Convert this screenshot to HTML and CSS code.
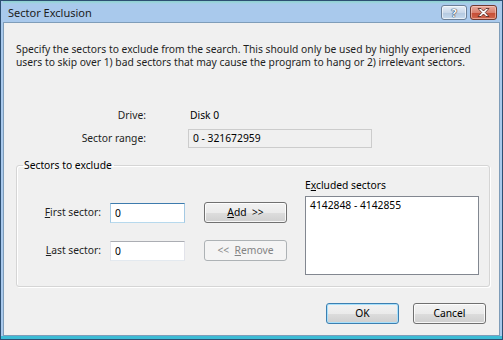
FILE: index.html
```html
<!DOCTYPE html>
<html lang="en">
<head>
    <meta charset="UTF-8">
    <title>Sector Exclusion</title>
    <link rel="stylesheet" href="styles.css">
</head>
<body>
    <div class="window">
        <div class="titlebar">
            <span class="title">Sector Exclusion</span>
            <div class="caption-buttons">
                <span class="cap-btn help">?</span>
                <span class="cap-btn close">
                    <svg width="13" height="9" viewBox="0 0 13 9">
                        <path d="M1 0.5 L4 0.5 L6.5 3 L9 0.5 L12 0.5 L8.3 4.5 L12 8.5 L9 8.5 L6.5 6 L4 8.5 L1 8.5 L4.7 4.5 Z" fill="#fff" stroke="#4a2018" stroke-width="0.8" stroke-linejoin="round"/>
                    </svg>
                </span>
            </div>
        </div>
        <div class="client">
            <p class="intro">Specify the sectors to exclude from the search. This should only be used by highly experienced<br>users to skip over 1) bad sectors that may cause the program to hang or 2) irrelevant sectors.</p>

            <div class="info">
                <span class="info-label">Drive:</span>
                <span class="info-value">Disk 0</span>
                <span class="info-label">Sector range:</span>
                <span class="readonly">0 - 321672959</span>
            </div>

            <fieldset class="group">
                <legend>Sectors to exclude</legend>
                <div class="group-body">
                    <div class="fields">
                        <label class="field-label" for="first"><u>F</u>irst sector:</label>
                        <input class="textbox focused" type="text" id="first" value="0">
                        <button class="btn"><u>A</u>dd &nbsp;&gt;&gt;</button>
                        <label class="field-label" for="last"><u>L</u>ast sector:</label>
                        <input class="textbox" type="text" id="last" value="0">
                        <button class="btn" disabled>&lt;&lt; &nbsp;<u>R</u>emove</button>
                    </div>
                    <div class="excluded">
                        <div class="excluded-label">E<u>x</u>cluded sectors</div>
                        <div class="listbox">
                            <div class="list-item">4142848 - 4142855</div>
                        </div>
                    </div>
                </div>
            </fieldset>

            <div class="actions">
                <button class="btn default">OK</button>
                <button class="btn">Cancel</button>
            </div>
        </div>
    </div>
</body>
</html>
```

FILE: styles.css
```css
* {
    margin: 0;
    padding: 0;
    box-sizing: border-box;
}

body {
    width: 503px;
    height: 340px;
    overflow: hidden;
    font-family: "Noto Sans", "Liberation Sans", sans-serif;
    font-size: 10.3px;
    line-height: 13px;
    color: #000;
}

.window {
    display: flex;
    flex-direction: column;
    width: 503px;
    height: 340px;
    border: 1px solid #2d4f73;
    padding: 0 2px 3px 2px;
    background: linear-gradient(to top, #3dbcd6 0, #3dbcd6 3px, #a9c9ec 3px);
}

/* title bar */

.titlebar {
    display: flex;
    align-items: center;
    justify-content: space-between;
    height: 21px;
    padding-left: 5px;
    background: linear-gradient(#8cd0cf 0, #9fd2e0 2px, #a9c9ec 3px);
}

.title {
    font-size: 11px;
    color: #1b1b1b;
    padding-top: 1px;
}

.caption-buttons {
    display: flex;
    gap: 3px;
    padding-right: 3px;
    padding-top: 2px;
}

.cap-btn {
    display: flex;
    align-items: center;
    justify-content: center;
    width: 27px;
    height: 15px;
    border: 1px solid #6b7f96;
    border-radius: 3px;
}

.help {
    width: 26px;
    background: linear-gradient(#e6eef7 0, #c9d8ea 50%, #b3c8df 51%, #c7dbef 100%);
    box-shadow: inset 0 0 0 1px rgba(255, 255, 255, 0.6);
    font-size: 11px;
    font-weight: bold;
    color: #fff;
    text-shadow: 0 0 1px #2a3c52, 0 0 1px #2a3c52, 0 0 1px #2a3c52;
}

.close {
    border-color: #6f3a30;
    background: linear-gradient(#e9a99c 0, #d9816f 50%, #c54b34 51%, #d0664c 100%);
    box-shadow: inset 0 0 0 1px rgba(255, 220, 210, 0.5);
}

/* client area */

.client {
    flex: 1;
    display: flex;
    flex-direction: column;
    background: #f0f0f0;
    border: 1px solid #7f9db9;
    padding: 0 9px 0 12px;
}

.intro {
    margin-top: 20px;
    white-space: nowrap;
    color: #1e1e1e;
}

.info {
    display: grid;
    grid-template-columns: 130px 184px;
    column-gap: 42px;
    row-gap: 7px;
    align-items: center;
    margin-top: 40px;
}

.info-label {
    text-align: right;
    color: #1e1e1e;
}

.info-value {
    padding-left: 2px;
}

.readonly {
    height: 19px;
    padding: 2px 4px;
    border: 1px solid #cccccc;
    background: #f0f0f0;
}

/* group box */

.group {
    margin-top: 11px;
    height: 128px;
    border: 1px solid #d5d5d5;
    border-radius: 3px;
    padding: 0 10px 0 22px;
    box-shadow: inset 1px 1px 0 #fff, 1px 1px 0 #fff;
}

.group legend {
    margin-left: -16px;
    padding: 0 2px 0 1px;
}

.group-body {
    display: flex;
    align-items: flex-start;
    justify-content: space-between;
}

.fields {
    display: grid;
    grid-template-columns: 62px 75px 83px;
    column-gap: 9px;
    row-gap: 17px;
    align-items: center;
    align-content: start;
    margin-top: 30px;
}

.field-label {
    text-align: right;
    color: #1e1e1e;
}

.textbox {
    width: 75px;
    height: 20px;
    padding: 0 4px;
    font: inherit;
    color: #000;
    background: #fff;
    border: 1px solid;
    border-color: #abadb3 #e2e3ea #e3e9ef #e2e3ea;
    outline: none;
}

.textbox.focused {
    border-color: #3d7bad #a4c9e3 #b7d9ed #a4c9e3;
}

.excluded {
    width: 174px;
    margin-top: 7px;
}

.excluded-label {
    margin-bottom: 4px;
}

.listbox {
    height: 79px;
    border: 1px solid #828790;
    background: #fff;
    padding: 2px 4px;
}

/* buttons */

.btn {
    width: 73px;
    height: 21px;
    font: inherit;
    color: #000;
    border: 1px solid #707070;
    border-radius: 3px;
    background: linear-gradient(#f2f2f2 0, #ebebeb 50%, #dddddd 51%, #cfcfcf 100%);
    box-shadow: inset 0 0 0 1px rgba(255, 255, 255, 0.8);
}

.btn:disabled {
    color: #838383;
    border-color: #adb2b5;
    background: #f4f4f4;
    box-shadow: none;
}

.fields .btn {
    width: 83px;
    margin-left: 10px;
}

.btn.default {
    border-color: #3c7fb1;
    box-shadow: inset 0 0 0 1px #a8e0fb;
}

.actions {
    display: flex;
    justify-content: flex-end;
    gap: 14px;
    margin-top: 16px;
    padding-right: 4px;
}
```
